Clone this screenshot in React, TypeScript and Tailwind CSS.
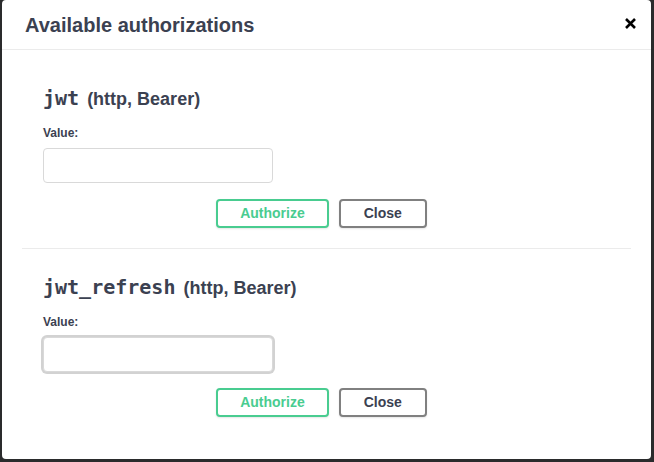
import React from "react";

const sans = { fontFamily: '"Liberation Sans", Arial, sans-serif' };

function Section({ name, focused, last }: { name: string; focused?: boolean; last?: boolean }) {
  return (
    <div className={`px-[21px] pt-[26px] pb-[20px] ${last ? "" : "border-b border-[#ebebeb]"}`}>
      <h4 className="flex items-baseline text-[#3b4151] h-[24px] leading-[24px]">
        <code className="font-['DejaVu_Sans_Mono',monospace] font-bold text-[20px]">{name}</code>
        <span className="ml-[8px] font-['Liberation_Sans',Arial,sans-serif] font-bold text-[18px]">(http, Bearer)</span>
      </h4>
      <label className="block mt-[15px] h-[16px] leading-[16px] text-[12px] font-bold text-[#3b4151] font-['Liberation_Sans',Arial,sans-serif]">
        Value:
      </label>
      <input
        type="text"
        className={`block mt-[7px] w-[230px] h-[35px] rounded-[4px] border border-[#d9d9d9] bg-white outline-none ${
          focused ? "ring-2 ring-[#d2d2d2] border-[#d2d2d2]" : ""
        }`}
      />
      <div className="flex justify-center mt-[16px]">
        <button className="mr-[10px] h-[29px] px-[22px] rounded-[4px] border-2 border-[#49cc90] text-[#49cc90] text-[14px] font-bold bg-white shadow-[0_1px_2px_rgba(0,0,0,0.1)] font-['Liberation_Sans',Arial,sans-serif]">
          Authorize
        </button>
        <button className="mr-[10px] h-[29px] px-[23px] rounded-[4px] border-2 border-[#808080] text-[#3b4151] text-[14px] font-bold bg-white shadow-[0_1px_2px_rgba(0,0,0,0.1)] font-['Liberation_Sans',Arial,sans-serif]">
          Close
        </button>
      </div>
    </div>
  );
}

export default function App() {
  return (
    <div className="w-[654px] h-[462px] bg-[#2a2b2c] flex pl-[2px] pr-[3px] pb-[3px]" style={sans}>
      <div className="flex-1 bg-white rounded-[4px] flex flex-col">
        <div className="h-[50px] flex items-center justify-between border-b border-[#ebebeb] pl-[23px] pr-[14px]">
          <h3 className="text-[20px] font-bold text-[#3b4151] mt-[1px]">Available authorizations</h3>
          <button className="w-[14px] h-[14px] flex items-center justify-center mt-[-2px]" aria-label="close">
            <svg width="11" height="11" viewBox="0 0 11 11">
              <path d="M1 1 L10 10 M10 1 L1 10" stroke="#000" strokeWidth="2.6" strokeLinecap="butt" />
            </svg>
          </button>
        </div>
        <div className="px-[20px] pt-[10px]">
          <Section name="jwt" />
          <Section name="jwt_refresh" focused last />
        </div>
      </div>
    </div>
  );
}
